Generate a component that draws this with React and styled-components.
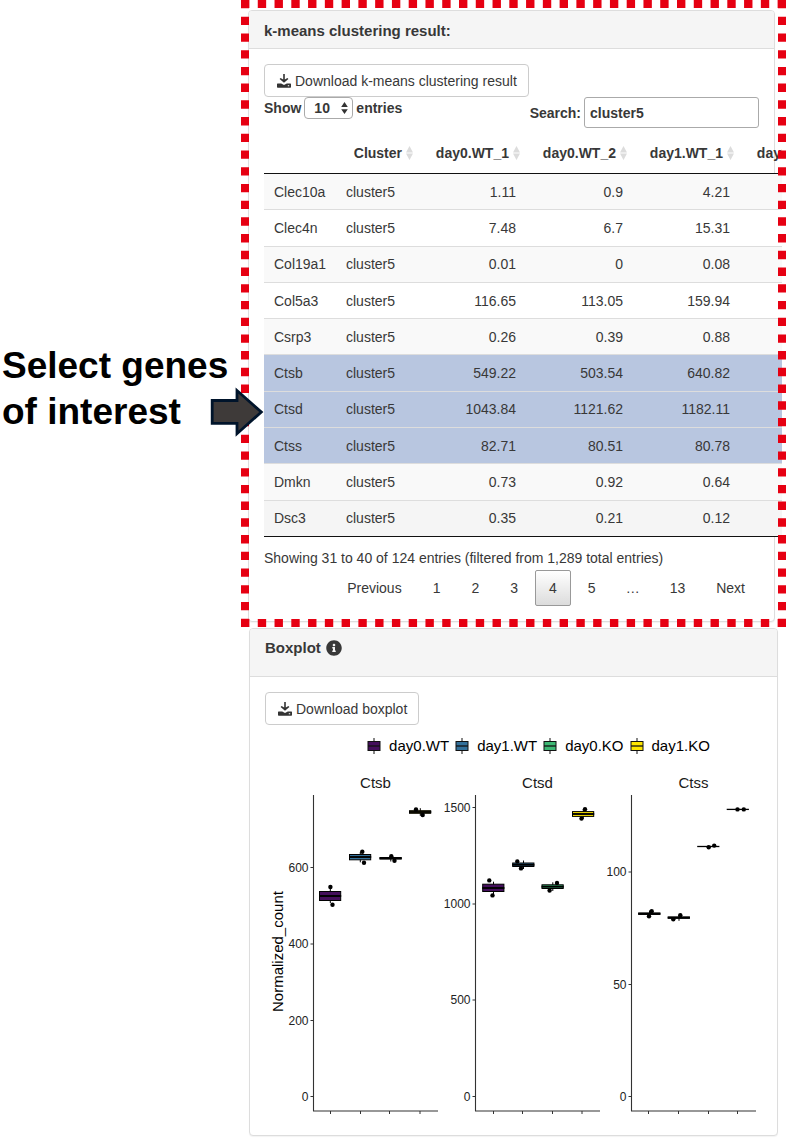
import React from 'react';
import styled, { createGlobalStyle } from 'styled-components';
import { FaInfoCircle } from 'react-icons/fa';

const GlobalStyle = createGlobalStyle`
  *, *::before, *::after { box-sizing: border-box; }
  body {
    margin: 0;
    background: #fff;
    color: #383838;
    font: 14px/20px "Liberation Sans", Arial, sans-serif;
  }
  button, input, select { font: inherit; color: inherit; margin: 0; }
`;

const Page = styled.div`
  display: grid;
  grid-template-columns: 241px minmax(0, 1fr);
  overflow: hidden;
`;

const Annotation = styled.aside`
  position: relative;
  padding: 343px 0 0 2px;
`;

const AnnotationText = styled.p`
  margin: 0;
  color: #000;
  font-size: 37px;
  font-weight: bold;
  line-height: 46px;
  white-space: nowrap;
`;

const Arrow = styled.svg`
  position: absolute;
  left: 210px;
  top: 386px;
  z-index: 2;
`;

const Main = styled.main`
  min-width: 0;
`;

const Highlight = styled.div`
  position: relative;
  padding: 10px 11px 5px 7px;
`;

const DashedFrame = styled.svg`
  position: absolute;
  inset: 0;
  width: 100%;
  height: 100%;
  pointer-events: none;
  stroke: #e60012;
  stroke-width: 8;
`;

const PlotSection = styled.div`
  padding: 1px 8px 5px 8px;
`;

const Card = styled.section`
  border: 1px solid #ddd;
  border-radius: 4px;
  background: #fff;
  box-shadow: 0 1px 1px rgba(0, 0, 0, 0.05);
`;

const CardHeader = styled.header`
  display: flex;
  align-items: center;
  gap: 5px;
  padding: ${(p) => (p.$tall ? '9px 15px 18px' : '10px 15px 7px')};
  background: #f5f5f5;
  border-bottom: 1px solid #ddd;
  border-radius: 3px 3px 0 0;
`;

const CardTitle = styled.h2`
  margin: 0;
  font-size: 15px;
  line-height: 20px;
`;

const CardBody = styled.div`
  padding: 15px;
`;

const DownloadButton = styled.button`
  display: flex;
  align-items: center;
  gap: 4px;
  height: 33px;
  padding: 0 11px 0 12px;
  border: 1px solid #ccc;
  border-radius: 4px;
  background: #fff;
  white-space: nowrap;
`;

const Controls = styled.div`
  display: flex;
  justify-content: space-between;
  align-items: flex-start;
  margin-bottom: 5px;
  font-weight: bold;
`;

const ControlLabel = styled.label`
  display: flex;
  align-items: center;
  gap: 3px;
`;

const SelectBox = styled.span`
  position: relative;
  display: flex;
`;

const Select = styled.select`
  appearance: none;
  width: 49px;
  height: 22px;
  padding: 0 0 0 9px;
  border: 1px solid #aaa;
  border-radius: 4px;
  background: #fff;
`;

const SelectArrows = styled.svg`
  position: absolute;
  right: 5px;
  top: 5px;
  pointer-events: none;
`;

const SearchInput = styled.input`
  width: 175px;
  height: 31px;
  padding: 0 5px;
  border: 1px solid #aaa;
  border-radius: 3px;
  background: #fff;
`;

const TableClip = styled.div`
  margin-right: -23px;
  overflow: hidden;
`;

const Table = styled.table`
  table-layout: fixed;
  width: 583px;
  border-spacing: 0;
  border-bottom: 1px solid #111;
`;

const HeadCell = styled.th`
  height: 41px;
  padding: 0 6px 0 0;
  border-bottom: 1px solid #111;
`;

const SortButton = styled.button`
  display: flex;
  align-items: center;
  justify-content: flex-end;
  gap: 4px;
  width: 100%;
  padding: 0;
  border: 0;
  background: none;
  font-weight: bold;
`;

const TableBody = styled.tbody`
  height: 362px;
`;

const rowColor = { odd: '#f9f9f9', even: '#fff', hover: '#f5f5f5', selected: '#b8c6e0' };

const Row = styled.tr`
  background: ${(p) => rowColor[p.$tone]};
  &:not(:first-child) > td { border-top: 1px solid #ddd; }
`;

const Cell = styled.td`
  padding: 7px 10px;
  text-align: ${(p) => (p.$numeric ? 'right' : 'left')};
`;

const TableInfo = styled.p`
  margin: 11px 0 2px;
`;

const Pagination = styled.nav`
  display: flex;
  justify-content: flex-end;
  gap: 3px;
`;

const PageButton = styled.button`
  height: 36px;
  padding: 0 13px;
  border: 1px solid ${(p) => (p.$current ? '#999' : 'transparent')};
  border-radius: 2px;
  background: ${(p) => (p.$current ? 'linear-gradient(#fff, #dcdcdc)' : 'none')};
`;

const Ellipsis = styled.span`
  padding: 0 13px;
  line-height: 36px;
`;

const Legend = styled.ul`
  display: flex;
  justify-content: center;
  gap: 6px;
  margin: 11px 0 4px;
  padding: 0 0 0 50px;
  list-style: none;
  color: #000;
  font-size: 15px;
`;

const LegendItem = styled.li`
  display: flex;
  align-items: center;
  gap: 8px;
  white-space: nowrap;
`;

const Chart = styled.svg`
  display: block;
  width: 100%;
  height: auto;
  font-family: "Liberation Sans", Arial, sans-serif;
`;

const DownloadIcon = () => (
  <svg width="14" height="14" viewBox="0 0 14 14" fill="#333" aria-hidden="true">
    <path d="M6.2 0h1.6v5.6l2.6-1.7 1 1.2L7 8.8 2.6 5.1l1-1.2 2.6 1.7z" />
    <path fillRule="evenodd" d="M.6 9.4h3.6L7 11l2.8-1.6h3.6q.6 0 .6.6v3.1q0 .7-.7.7H.7q-.7 0-.7-.7V10q0-.6.6-.6zM10.8 11.2v1h1.4v-1z" />
  </svg>
);

const SortIcon = () => (
  <svg width="7" height="14" viewBox="0 0 7 14" fill="#dcdcdc" aria-hidden="true">
    <path d="M3.5 0L7 6.4H0zM0 7.6h7L3.5 14z" />
  </svg>
);

const columns = ['Cluster', 'day0.WT_1', 'day0.WT_2', 'day1.WT_1', 'day1.WT_2'];
const columnWidths = [72, 83, 107, 107, 107, 107];

const genes = [
  ['Clec10a', '1.11', '0.9', '4.21'],
  ['Clec4n', '7.48', '6.7', '15.31'],
  ['Col19a1', '0.01', '0', '0.08'],
  ['Col5a3', '116.65', '113.05', '159.94'],
  ['Csrp3', '0.26', '0.39', '0.88'],
  ['Ctsb', '549.22', '503.54', '640.82'],
  ['Ctsd', '1043.84', '1121.62', '1182.11'],
  ['Ctss', '82.71', '80.51', '80.78'],
  ['Dmkn', '0.73', '0.92', '0.64'],
  ['Dsc3', '0.35', '0.21', '0.12'],
];
const selectedGenes = ['Ctsb', 'Ctsd', 'Ctss'];
const hoveredGene = 'Dsc3';

const toneOf = (gene, index) => {
  if (selectedGenes.includes(gene)) return 'selected';
  if (gene === hoveredGene) return 'hover';
  return index % 2 === 0 ? 'odd' : 'even';
};

const groups = [
  { name: 'day0.WT', color: '#440f5c' },
  { name: 'day1.WT', color: '#33709a' },
  { name: 'day0.KO', color: '#3db874' },
  { name: 'day1.KO', color: '#fde500' },
];

/* Each box is [left, top, bottom, median]; points are [x, y]. */
const panels = [
  {
    title: 'Ctsb',
    x: 48.5,
    ticks: [['600', 107.5], ['400', 184], ['200', 260.5], ['0', 336.5]],
    xTicks: [65.5, 95.5, 124.5, 155],
    boxes: [[54.5, 131.5, 140.5, 136], [84.5, 94.5, 99.8, 97], [115, 97.5, 99, 98.3], [144.5, 50.7, 53.3, 52]],
    points: [[65.4, 127], [67.5, 144.7], [97.3, 91.8], [99, 102.7], [126.3, 96.3], [129.5, 100.8], [151, 49.5], [157.7, 55]],
  },
  {
    title: 'Ctsd',
    x: 210.5,
    ticks: [['1500', 47.5], ['1000', 144], ['500', 240], ['0', 336.5]],
    xTicks: [228.5, 257.5, 287.5, 317],
    boxes: [[217.7, 124.2, 131.5, 128], [247.7, 103, 106.5, 104.8], [277, 124.8, 128.5, 126.7], [307.5, 51.6, 56.4, 54]],
    points: [[224.3, 120.4], [227.5, 135.4], [252.3, 101.4], [256, 108.4], [292, 123], [284.6, 130.6], [320, 49.3], [316.5, 58.6]],
  },
  {
    title: 'Ctss',
    x: 366.5,
    ticks: [['100', 112], ['50', 224.5], ['0', 336.5]],
    xTicks: [383.5, 413.5, 443.5, 472.5],
    boxes: [[373.7, 153, 154.4, 153.7], [403.2, 157, 158.3, 157.6], [432.7, 86.5, 86.5, 86.5], [462.2, 49.4, 49.4, 49.4]],
    points: [[386.7, 151.2], [384, 156.2], [415.3, 155.3], [408.3, 159.2], [443.7, 87.3], [449.2, 85.6], [472.5, 49.4], [478.8, 49.4]],
  },
];

const Panel = ({ panel }) => (
  <g>
    <text x={panel.x + 62} y="28" fontSize="15" textAnchor="middle" fill="#1a1a1a">{panel.title}</text>
    <path d={`M${panel.x} 35V351H${panel.x + 124.5}`} fill="none" stroke="#333" strokeWidth="1.1" />
    {panel.ticks.map(([label, y]) => (
      <g key={label}>
        <line x1={panel.x - 3} x2={panel.x} y1={y} y2={y} stroke="#333" />
        <text x={panel.x - 5} y={y + 4} fontSize="12" textAnchor="end" fill="#222">{label}</text>
      </g>
    ))}
    {panel.xTicks.map((x) => (
      <line key={x} x1={x} x2={x} y1="351" y2="354" stroke="#333" />
    ))}
    {panel.boxes.map(([left, top, bottom, median], i) => {
      const flat = bottom === top;
      return (
        <g key={left} stroke="#000">
          {!flat && <line x1={left + 10.8} x2={left + 10.8} y1={top - 2.5} y2={bottom + 2.5} />}
          {!flat && <rect x={left} y={top} width="21.2" height={bottom - top} fill={groups[i].color} />}
          <line x1={left - 0.5} x2={left + 21.7} y1={median} y2={median} strokeWidth={flat ? 1.3 : 1.9} />
        </g>
      );
    })}
    {panel.points.map(([cx, cy]) => (
      <circle key={`${cx}-${cy}`} cx={cx} cy={cy} r="2.2" />
    ))}
  </g>
);

export default function App() {
  return (
    <>
      <GlobalStyle />
      <Page>
        <Annotation>
          <AnnotationText>Select genes<br />of interest</AnnotationText>
          <Arrow width="54" height="52" viewBox="0 0 54 52" aria-hidden="true">
            <path d="M2.2 14.5H27V4.5L51.3 26 27 47.7V37.3H2.2z" fill="#3e3a39" stroke="#00142b" strokeWidth="2.8" />
          </Arrow>
        </Annotation>
        <Main>
          <Highlight>
            <Card>
              <CardHeader>
                <CardTitle>k-means clustering result:</CardTitle>
              </CardHeader>
              <CardBody>
                <DownloadButton type="button">
                  <DownloadIcon />
                  Download k-means clustering result
                </DownloadButton>
                <Controls>
                  <ControlLabel>
                    Show
                    <SelectBox>
                      <Select defaultValue="10" aria-label="Entries per page">
                        <option>10</option>
                        <option>25</option>
                        <option>50</option>
                      </Select>
                      <SelectArrows width="7" height="12" viewBox="0 0 7 12" fill="#333" aria-hidden="true">
                        <path d="M3.5 0L6.8 5H.2zM.2 7.2h6.6L3.5 12z" />
                      </SelectArrows>
                    </SelectBox>
                    entries
                  </ControlLabel>
                  <ControlLabel>
                    Search:
                    <SearchInput type="text" defaultValue="cluster5" />
                  </ControlLabel>
                </Controls>
                <TableClip>
                  <Table>
                    <colgroup>
                      {columnWidths.map((width, i) => <col key={i} width={width} />)}
                    </colgroup>
                    <thead>
                      <tr>
                        <HeadCell aria-label="Gene" />
                        {columns.map((name) => (
                          <HeadCell key={name} scope="col">
                            <SortButton type="button">{name}<SortIcon /></SortButton>
                          </HeadCell>
                        ))}
                      </tr>
                    </thead>
                    <TableBody>
                      {genes.map(([gene, ...values], index) => (
                        <Row key={gene} $tone={toneOf(gene, index)}>
                          <Cell>{gene}</Cell>
                          <Cell>cluster5</Cell>
                          {values.map((value, i) => <Cell key={i} $numeric>{value}</Cell>)}
                          <Cell />
                        </Row>
                      ))}
                    </TableBody>
                  </Table>
                </TableClip>
                <TableInfo>Showing 31 to 40 of 124 entries (filtered from 1,289 total entries)</TableInfo>
                <Pagination aria-label="Table pages">
                  <PageButton type="button">Previous</PageButton>
                  {['1', '2', '3', '4', '5'].map((n) => (
                    <PageButton key={n} type="button" $current={n === '4'}>{n}</PageButton>
                  ))}
                  <Ellipsis>…</Ellipsis>
                  <PageButton type="button">13</PageButton>
                  <PageButton type="button">Next</PageButton>
                </Pagination>
              </CardBody>
            </Card>
            <DashedFrame aria-hidden="true">
              <svg y="4" overflow="visible"><line x2="100%" pathLength="65" strokeDasharray="1 1" /></svg>
              <svg y="100%" overflow="visible"><line x2="100%" y1="-4" y2="-4" pathLength="65" strokeDasharray="1 1" /></svg>
              <svg x="4" overflow="visible"><line y2="100%" pathLength="75" strokeDasharray="1 1" /></svg>
              <svg x="100%" overflow="visible"><line x1="-4" x2="-4" y2="100%" pathLength="75" strokeDasharray="1 1" /></svg>
            </DashedFrame>
          </Highlight>
          <PlotSection>
            <Card>
              <CardHeader $tall>
                <CardTitle>Boxplot</CardTitle>
                <FaInfoCircle size={16} aria-label="About this plot" />
              </CardHeader>
              <CardBody>
                <DownloadButton type="button">
                  <DownloadIcon />
                  Download boxplot
                </DownloadButton>
                <Legend>
                  {groups.map(({ name, color }) => (
                    <LegendItem key={name}>
                      <svg width="14" height="16" viewBox="0 0 14 16" stroke="#111" aria-hidden="true">
                        <path d="M7 0v16" />
                        <rect x="1" y="3.5" width="12" height="9" fill={color} />
                        <path d="M1 8h12" strokeWidth="1.3" />
                      </svg>
                      {name}
                    </LegendItem>
                  ))}
                </Legend>
                <Chart viewBox="0 0 497 360" role="img" aria-label="Box plots of normalized counts for Ctsb, Ctsd and Ctss">
                  <text transform="translate(18 252) rotate(-90)" fontSize="15" fill="#000">Normalized_count</text>
                  {panels.map((panel) => <Panel key={panel.title} panel={panel} />)}
                </Chart>
              </CardBody>
            </Card>
          </PlotSection>
        </Main>
      </Page>
    </>
  );
}
